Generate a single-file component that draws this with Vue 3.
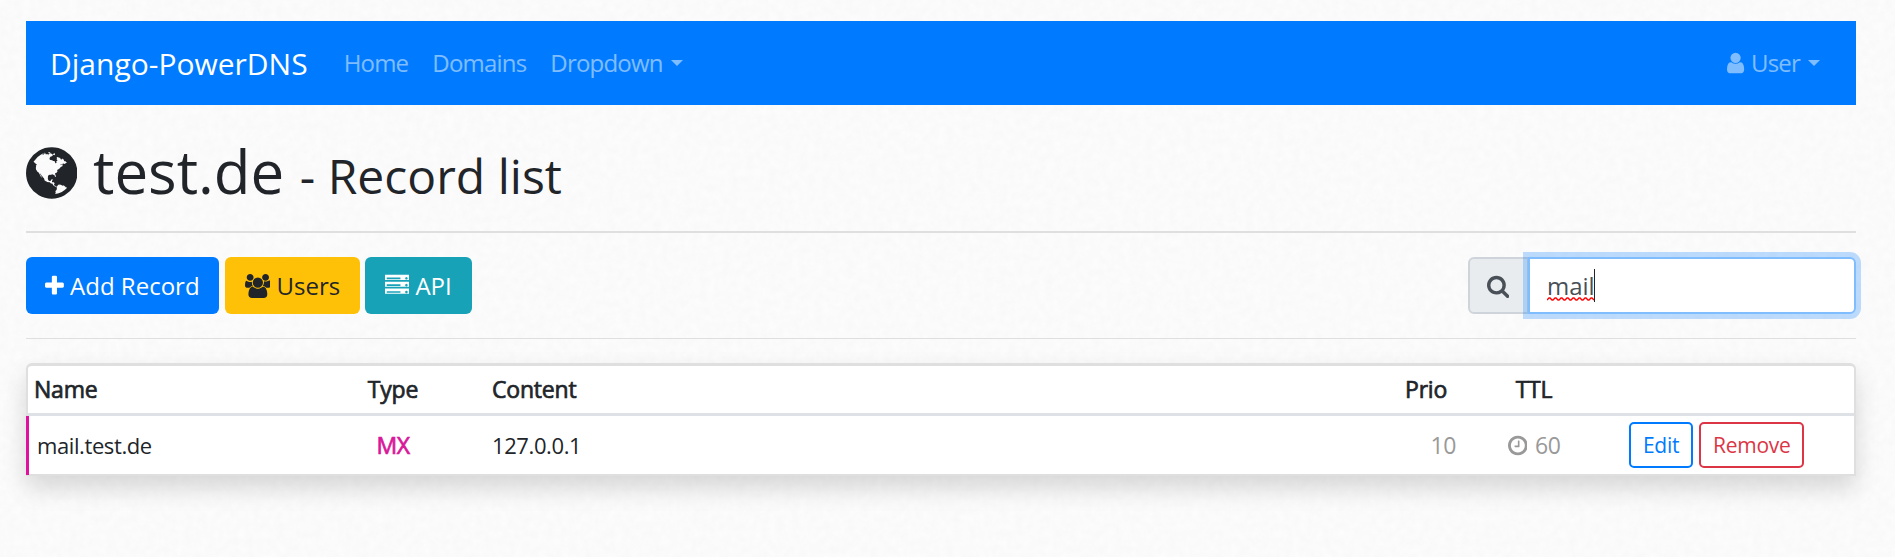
<script setup>
const icons = {
  user: { box: '256 0 1280 1792', d: 'M1536 1399q0 109-62.5 187t-150.5 78h-854q-88 0-150.5-78t-62.5-187q0-85 8.5-160.5t31.5-152 58.5-131 94-89 134.5-34.5q131 128 313 128t313-128q76 0 134.5 34.5t94 89 58.5 131 31.5 152 8.5 160.5zm-256-887q0 159-112.5 271.5t-271.5 112.5-271.5-112.5-112.5-271.5 112.5-271.5 271.5-112.5 271.5 112.5 112.5 271.5z' },
  plus: { box: '192 0 1408 1792', d: 'M1600 736v192q0 40-28 68t-68 28h-416v416q0 40-28 68t-68 28h-192q-40 0-68-28t-28-68v-416h-416q-40 0-68-28t-28-68v-192q0-40 28-68t68-28h416v-416q0-40 28-68t68-28h192q40 0 68 28t28 68v416h416q40 0 68 28t28 68z' },
  users: { box: '0 0 1920 1792', d: 'M593 896q-162 5-265 128h-134q-82 0-138-40.5t-56-118.5q0-353 124-353 6 0 43.5 21t97.5 42.5 119 21.5q67 0 133-23-5 37-5 66 0 159 93 293zm1071 637q0 120-73 189.5t-194 69.5h-874q-121 0-194-69.5t-73-189.5q0-53 3.5-103.5t14-109 26.5-108.5 43-97.5 62-81 85.5-53.5 111.5-20q10 0 43 21.5t73 48 107 48 135 21.5 135-21.5 107-48 73-48 43-21.5q61 0 111.5 20t85.5 53.5 62 81 43 97.5 26.5 108.5 14 109 3.5 103.5zm-1024-1277q0 106-75 181t-181 75-181-75-75-181 75-181 181-75 181 75 75 181zm704 384q0 159-112.5 271.5t-271.5 112.5-271.5-112.5-112.5-271.5 112.5-271.5 271.5-112.5 271.5 112.5 112.5 271.5zm576 225q0 78-56 118.5t-138 40.5h-134q-103-123-265-128 93-134 93-293 0-29-5-66 66 23 133 23 59 0 119-21.5t97.5-42.5 43.5-21q124 0 124 353zm-128-609q0 106-75 181t-181 75-181-75-75-181 75-181 181-75 181 75 75 181z' },
  server: { box: '0 0 1792 1792', d: 'M128 1408h1024v-128h-1024v128zm0-512h1024v-128h-1024v128zm1568 448q0-40-28-68t-68-28-68 28-28 68 28 68 68 28 68-28 28-68zm-1568-960h1024v-128h-1024v128zm1568 448q0-40-28-68t-68-28-68 28-28 68 28 68 68 28 68-28 28-68zm0-512q0-40-28-68t-68-28-68 28-28 68 28 68 68 28 68-28 28-68zm96 768v384h-1792v-384h1792zm0-512v384h-1792v-384h1792zm0-512v384h-1792v-384h1792z' },
  search: { box: '64 0 1664 1792', d: 'M1216 832q0-185-131.5-316.5t-316.5-131.5-316.5 131.5-131.5 316.5 131.5 316.5 316.5 131.5 316.5-131.5 131.5-316.5zm512 832q0 52-38 90t-90 38q-54 0-90-38l-343-342q-179 124-399 124-143 0-273.5-55.5t-225-150-150-225-55.5-273.5 55.5-273.5 150-225 225-150 273.5-55.5 273.5 55.5 225 150 150 225 55.5 273.5q0 220-124 399l343 343q37 37 37 90z' },
  clock: { box: '128 0 1536 1792', d: 'M1024 544v448q0 14-9 23t-23 9h-320q-14 0-23-9t-9-23v-64q0-14 9-23t23-9h224v-352q0-14 9-23t23-9h64q14 0 23 9t9 23zm416 352q0-148-73-273t-198-198-273-73-273 73-198 198-73 273 73 273 198 198 273 73 273-73 198-198 73-273zm224 0q0 209-103 385.5t-279.5 279.5-385.5 103-385.5-103-279.5-279.5-103-385.5 103-385.5 279.5-279.5 385.5-103 385.5 103 279.5 279.5 103 385.5z' },
  globe: { box: '128 0 1536 1792', d: 'M896 128q209 0 385.5 103t279.5 279.5 103 385.5-103 385.5-279.5 279.5-385.5 103-385.5-103-279.5-279.5-103-385.5 103-385.5 279.5-279.5 385.5-103zm274 521q-2 1-9.5 9.5t-13.5 9.5q2 0 4.5-5t5-11 3.5-7q6-7 22-15 14-6 52-12 34-8 51 11-2-2 9.5-13t14.5-12q3-2 15-4.5t15-7.5l2-22q-12 1-17.5-7t-6.5-21q0 2-6 8 0-7-4.5-8t-11.5 1-9 1q-10-3-15-7.5t-8-16.5-4-15q-2-5-9.5-11t-9.5-10q-1-2-2.5-5.5t-3-6.5-4-5.5-5.5-2.5-7 5-7.5 10-4.5 5q-3-2-6-1.5t-4.5 1-4.5 3-5 3.5q-3 2-8.5 3t-8.5 2q15-5-1-11-10-4-16-3 9-4 7.5-12t-8.5-14h5q-1-4-8.5-8.5t-17.5-8.5-13-6q-8-5-34-9.5t-33-.5q-5 6-4.5 10.5t4 14 3.5 12.5q1 6-5.5 13t-6.5 12q0 7 14 15.5t10 21.5q-3 8-16 16t-16 12q-5 8-1.5 18.5t10.5 16.5q2 2 1.5 4t-3.5 4.5-5.5 4-6.5 3.5l-3 2q-11 5-20.5-6t-13.5-26q-7-25-16-30-23-8-29 1-5-13-41-26-25-9-58-4 6-1 0-15-7-15-19-12 3-6 4-17.5t1-13.5q3-13 12-23 1-1 7-8.5t9.5-13.5.5-6q35 4 50-11 5-5 11.5-17t10.5-17q9-6 14-5.5t14.5 5.5 14.5 5q14 1 15.5-11t-7.5-20q12 1 3-17-4-7-8-9-12-4-27 5-8 4 2 8-1-1-9.5 10.5t-16.5 17.5-16-5q-1-1-5.5-13.5t-9.5-13.5q-8 0-16 15 3-8-11-15t-24-8q19-12-8-27-7-4-20.5-5t-19.5 4q-5 7-5.5 11.5t5 8 10.5 5.5 11.5 4 8.5 3q14 10 8 14-2 1-8.5 3.5t-11.5 4.5-6 4q-3 4 0 14t-2 14q-5-5-9-17.5t-7-16.5q7 9-25 6l-10-1q-4 0-16 2t-20.5 1-13.5-8q-4-8 0-20 1-4 4-2-4-3-11-9.5t-10-8.5q-46 15-94 41 6 1 12-1 5-2 13-6.5t10-5.5q34-14 42-7l5-5q14 16 20 25-7-4-30-1-20 6-22 12 7 12 5 18-4-3-11.5-10t-14.5-11-15-5q-16 0-22 1-146 80-235 222 7 7 12 8 4 1 5 9t2.5 11 11.5-3q9 8 3 19 1-1 44 27 19 17 21 21 3 11-10 18-1-2-9-9t-9-4q-3 5 .5 18.5t10.5 12.5q-7 0-9.5 16t-2.5 35.5-1 23.5l2 1q-3 12 5.5 34.5t21.5 19.5q-13 3 20 43 6 8 8 9 3 2 12 7.5t15 10 10 10.5q4 5 10 22.5t14 23.5q-2 6 9.5 20t10.5 23q-1 0-2.5 1t-2.5 1q3 7 15.5 14t15.5 13q1 3 2 10t3 11 8 2q2-20-24-62-15-25-17-29-3-5-5.5-15.5t-4.5-14.5q2 0 6 1.5t8.5 3.5 7.5 4 2 3q-3 7 2 17.5t12 18.5 17 19 12 13q6 6 14 19.5t0 13.5q9 0 20 10.5t17 19.5q5 8 8 26t5 24q2 7 8.5 13.5t12.5 9.5l16 8 13 7q5 2 18.5 10.5t21.5 11.5q10 4 16 4t14.5-2.5 13.5-3.5q15-2 29 15t21 21q36 19 55 11-2 1 .5 7.5t8 15.5 9 14.5 5.5 8.5q5 6 18 15t18 15q6-4 7-9-3 8 7 20t18 10q14-3 14-32-31 15-49-18 0-1-2.5-5.5t-4-8.5-2.5-8.5 0-7.5 5-3q9 0 10-3.5t-2-12.5-4-13q-1-8-11-20t-12-15q-5 9-16 8t-16-9q0 1-1.5 5.5t-1.5 6.5q-13 0-15-1 1-3 2.5-17.5t3.5-22.5q1-4 5.5-12t7.5-14.5 4-12.5-4.5-9.5-17.5-2.5q-19 1-26 20-1 3-3 10.5t-5 11.5-9 7q-7 3-24 2t-24-5q-13-8-22.5-29t-9.5-37q0-10 2.5-26.5t3-25-5.5-24.5q3-2 9-9.5t10-10.5q2-1 4.5-1.5t4.5 0 4-1.5 3-6q-1-1-4-3-3-3-4-3 7 3 28.5-1.5t27.5 1.5q15 11 22-2 0-1-2.5-9.5t-.5-13.5q5 27 29 9 3 3 15.5 5t17.5 5q3 2 7 5.5t5.5 4.5 5-.5 8.5-6.5q10 14 12 24 11 40 19 44 7 3 11 2t4.5-9.5 0-14-1.5-12.5l-1-8v-18l-1-8q-15-3-18.5-12t1.5-18.5 15-18.5q1-1 8-3.5t15.5-6.5 12.5-8q21-19 15-35 7 0 11-9-1 0-5-3t-7.5-5-4.5-2q9-5 2-16 5-3 7.5-11t7.5-10q9 12 21 2 8-8 1-16 5-7 20.5-10.5t18.5-9.5q7 2 8-2t1-12 3-12q4-5 15-9t13-5l17-11q3-4 0-4 18 2 31-11 10-11-6-20 3-6-3-9.5t-15-5.5q3-1 11.5-.5t10.5-1.5q15-10-7-16-17-5-43 12zm-163 877q206-36 351-189-3-3-12.5-4.5t-12.5-3.5q-18-7-24-8 1-7-2.5-13t-8-9-12.5-8-11-7q-2-2-7-6t-7-5.5-7.5-4.5-8.5-2-10 1l-3 1q-3 1-5.5 2.5t-5.5 3-4 3 0 2.5q-21-17-36-22-5-1-11-5.5t-10.5-7-10-1.5-11.5 7q-5 5-6 15t-2 13q-7-5 0-17.5t2-18.5q-3-6-10.5-4.5t-12 4.5-11.5 8.5-9 6.5-8.5 5.5-8.5 7.5q-3 4-6 12t-5 11q-2-4-11.5-6.5t-9.5-5.5q2 10 4 35t5 38q7 31-12 48-27 25-29 40-4 22 12 26 0 7-8 20.5t-7 21.5q0 6 2 16z' },
}
const records = [{ name: 'mail.test.de', type: 'MX', content: '127.0.0.1', prio: 10, ttl: 60 }]
</script>

<template>
  <div class="page">
    <svg class="paper" width="100%" height="100%" aria-hidden="true">
      <filter id="grain" x="0" y="0" width="100%" height="100%" color-interpolation-filters="sRGB">
        <feTurbulence type="fractalNoise" baseFrequency="0.13" numOctaves="3" seed="4" />
        <feColorMatrix values="0.022 0 0 0 0.971  0.022 0 0 0 0.971  0.022 0 0 0 0.971  0 0 0 0 1" />
      </filter>
      <rect width="100%" height="100%" filter="url(#grain)" />
    </svg>
    <nav class="navbar">
      <a class="brand">Django-PowerDNS</a>
      <a class="link">Home</a>
      <a class="link">Domains</a>
      <a class="link caret">Dropdown</a>
      <a class="link caret user"><svg class="icon" :viewBox="icons.user.box"><path :d="icons.user.d" /></svg> User</a>
    </nav>
    <h1><svg class="icon" :viewBox="icons.globe.box"><path :d="icons.globe.d" /></svg> test.de <small>- Record list</small></h1>
    <hr />
    <div class="toolbar">
      <button class="btn primary"><svg class="icon" :viewBox="icons.plus.box"><path :d="icons.plus.d" /></svg> Add Record</button>
      <button class="btn warning"><svg class="icon" :viewBox="icons.users.box"><path :d="icons.users.d" /></svg> Users</button>
      <button class="btn info"><svg class="icon" :viewBox="icons.server.box"><path :d="icons.server.d" /></svg> API</button>
      <div class="search">
        <span class="addon"><svg class="icon" :viewBox="icons.search.box"><path :d="icons.search.d" /></svg></span>
        <div class="field"><span class="typed">mail<svg class="squiggle" viewBox="0 0 48 4"><path d="M0 3l2-2h1l2 2h1l2-2h1l2 2h1l2-2h1l2 2h1l2-2h1l2 2h1l2-2h1l2 2h1l2-2h1l2 2h1l2-2h1l2 2h1l2-2h1l2 2" /></svg></span></div>
      </div>
    </div>
    <hr class="second" />
    <div class="card">
      <div class="row head">
        <span class="name">Name</span><span class="type">Type</span><span>Content</span>
        <span class="prio">Prio</span><span class="ttl">TTL</span><span></span>
      </div>
      <div v-for="r in records" :key="r.name" class="row record">
        <span class="name">{{ r.name }}</span>
        <span class="type">{{ r.type }}</span>
        <span>{{ r.content }}</span>
        <span class="prio">{{ r.prio }}</span>
        <span class="ttl"><svg class="icon" :viewBox="icons.clock.box"><path :d="icons.clock.d" /></svg> {{ r.ttl }}</span>
        <span class="actions"><button class="small edit">Edit</button><button class="small remove">Remove</button></span>
      </div>
    </div>
  </div>
</template>

<style>
body { margin: 0; background: #fafafa; overflow: hidden; }
</style>

<style scoped>
* { box-sizing: border-box; }
.page {
  position: relative;
  isolation: isolate;
  height: 557px;
  padding: 21px 39px 0 26px;
  font: 24px/36px "Open Sans", "Noto Sans", sans-serif;
  color: #212529;
}
.paper { position: absolute; inset: 0; z-index: -1; }
.icon { height: 1em; width: auto; fill: currentColor; vertical-align: -0.143em; }
.navbar {
  display: flex;
  align-items: center;
  height: 84px;
  padding: 0 24px;
  background: #007bff;
  color: rgba(255, 255, 255, .5);
}
.brand { font-size: 30px; line-height: 45px; color: #fff; margin-right: 24px; }
.link { padding: 0 12px; letter-spacing: -0.8px; }
.caret::after {
  content: "";
  display: inline-block;
  margin-left: 8px;
  vertical-align: 6px;
  border: 6.5px solid transparent;
  border-top-color: currentColor;
  border-bottom: 0;
}
.user { margin-left: auto; }
.user .icon { margin-right: 1px; }
h1 { margin: 30px 0 0; font-size: 60px; line-height: 72px; font-weight: 400; white-space: nowrap; }
small { font-size: 48px; }
hr { margin: 24px 0; height: 2px; border: 0; background: #dfdfdf; }
h1 + hr { margin-top: 19px; }
.toolbar { display: flex; gap: 6px; height: 57px; }
.btn {
  height: 57px;
  padding: 0 19px;
  border: 0;
  border-radius: 6px;
  font: inherit;
  color: #fff;
  white-space: nowrap;
}
.primary { background: #007bff; }
.warning { padding: 0 20px; background: #ffc107; color: #212529; }
.info { padding: 0 20px; margin-left: -1px; background: #17a2b8; }
.search { display: flex; width: 388px; margin-left: auto; color: #495057; }
.addon {
  width: 61px;
  padding: 9px 0 0 17px;
  border: 2px solid #ced4da;
  border-radius: 6px 0 0 6px;
  background: #e9ecef;
  margin-right: -1px;
}
.field {
  flex: 1;
  padding: 9px 17px;
  border: 2px solid #80bdff;
  border-radius: 0 6px 6px 0;
  background: #fff;
  box-shadow: 0 0 0 5px rgba(0, 123, 255, .25);
}
.typed { position: relative; display: inline-block; }
.typed::after {
  content: "";
  position: absolute;
  right: 0;
  top: 1px;
  width: 1px;
  height: 33px;
  background: #212529;
}
.squiggle { position: absolute; left: 0; bottom: 3px; width: 48px; height: 4px; fill: none; stroke: #f00; stroke-width: 1.4; }
.second { margin: 24px 0 24px; height: 1px; background: #dfdfdf; }
.card {
  border: 2px solid #dfdfdf;
  border-top-width: 3px;
  border-radius: 6px 6px 0 0;
  background: #fff;
  box-shadow: 0 12px 24px rgba(0, 0, 0, .15);
}
.row { display: grid; grid-template-columns: 274px 182px 913px 67px 140px 1fr; font-size: 22px; letter-spacing: -0.4px; align-items: center; }
.row > span { padding: 0 8px; }
.row .name { padding-left: 6px; }
.head {
  height: 50px;
  padding-bottom: 2px;
  border-bottom: 3px solid #dee2e6;
  font-size: 23px;
  letter-spacing: -0.2px;
  -webkit-text-stroke: .7px currentColor;
}
.record { position: relative; height: 58px; padding-bottom: 1px; }
.record::before { content: ""; position: absolute; left: -2px; top: 0; width: 3px; height: 59px; background: #e0119d; }
.record .name { padding-left: 9px; }
.type, .ttl { text-align: center; }
.record .type { color: #d9179a; font-size: 23px; -webkit-text-stroke: .7px currentColor; }
.record .prio { text-align: right; }
.record .prio, .record .ttl { color: #999; font-size: 23px; }
.ttl .icon { margin-right: 2px; }
.row .actions { display: flex; gap: 6px; padding-left: 25px; padding-top: 1px; }
.small {
  height: 46px;
  padding: 0 12px;
  border: 2px solid;
  border-radius: 5px;
  background: transparent;
  font: 21px/31px "Open Sans", sans-serif;
  letter-spacing: -0.3px;
}
.edit { color: #007bff; }
.remove { color: #dc3545; }
</style>
